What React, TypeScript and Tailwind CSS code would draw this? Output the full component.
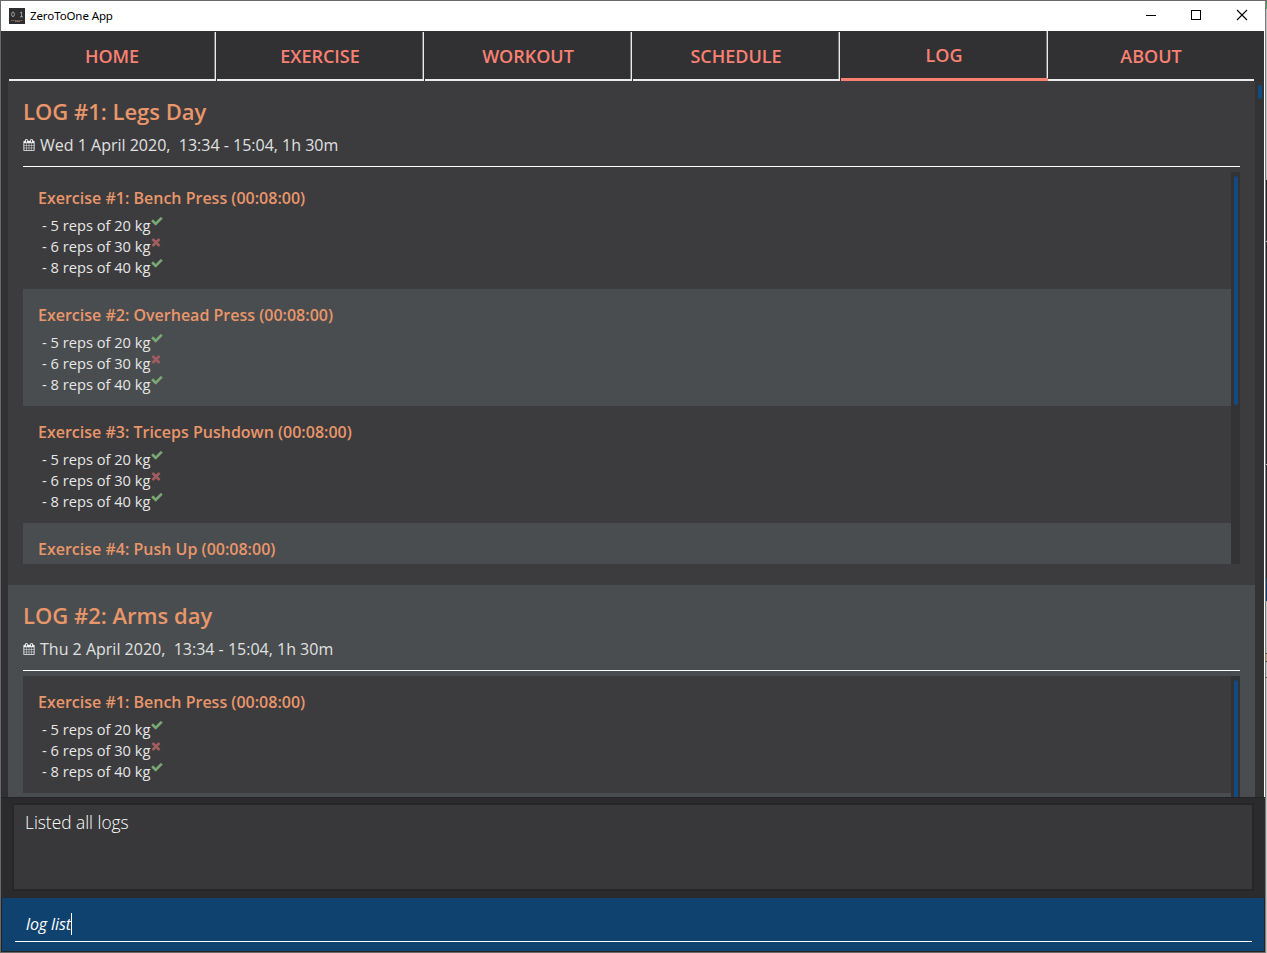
import React from "react";

const CHECK =
  "M1671 566q0 40-28 68l-724 724-136 136q-28 28-68 28t-68-28l-136-136-362-362q-28-28-28-68t28-68l136-136q28-28 68-28t68 28l294 295 656-657q28-28 68-28t68 28l136 136q28 28 28 68z";
const TIMES =
  "M1490 1322q0 40-28 68l-136 136q-28 28-68 28t-68-28l-294-294-294 294q-28 28-68 28t-68-28l-136-136q-28-28-28-68t28-68l294-294-294-294q-28-28-28-68t28-68l136-136q28-28 68-28t68 28l294 294 294-294q28-28 68-28t68 28l136 136q28 28 28 68t-28 68l-294 294 294 294q28 28 28 68z";
const CALENDAR =
  "M192 1664h288v-288h-288v288zm352 0h320v-288h-320v288zm-352-352h288v-320h-288v320zm352 0h320v-320h-320v320zm-352-384h288v-288h-288v288zm736 736h320v-288h-320v288zm-384-736h320v-288h-320v288zm768 736h288v-288h-288v288zm-384-352h320v-320h-320v320zm-352-864v-288q0-13-9.5-22.5t-22.5-9.5h-64q-13 0-22.5 9.5t-9.5 22.5v288q0 13 9.5 22.5t22.5 9.5h64q13 0 22.5-9.5t9.5-22.5zm736 864h288v-320h-288v320zm-384-384h320v-288h-320v288zm384 0h288v-288h-288v288zm32-480v-288q0-13-9.5-22.5t-22.5-9.5h-64q-13 0-22.5 9.5t-9.5 22.5v288q0 13 9.5 22.5t22.5 9.5h64q13 0 22.5-9.5t9.5-22.5zm384-64v1280q0 52-38 90t-90 38h-1408q-52 0-90-38t-38-90v-1280q0-52 38-90t90-38h128v-96q0-66 47-113t113-47h64q66 0 113 47t47 113v96h384v-96q0-66 47-113t113-47h64q66 0 113 47t47 113v96h128q52 0 90 38t38 90z";

type WorkoutSet = { text: string; done: boolean };
type ExerciseEntry = { name: string; sets: WorkoutSet[] };
type Log = { title: string; date: string; exercises: ExerciseEntry[]; moreBelow: boolean };

const SETS: WorkoutSet[] = [
  { text: "- 5 reps of 20 kg", done: true },
  { text: "- 6 reps of 30 kg", done: false },
  { text: "- 8 reps of 40 kg", done: true },
];

const LOGS: Log[] = [
  {
    title: "LOG #1: Legs Day",
    date: "Wed 1 April 2020,\u00a0 13:34 - 15:04, 1h 30m",
    exercises: [
      { name: "Bench Press", sets: SETS },
      { name: "Overhead Press", sets: SETS },
      { name: "Triceps Pushdown", sets: SETS },
      { name: "Push Up", sets: [] },
    ],
    moreBelow: false,
  },
  {
    title: "LOG #2: Arms day",
    date: "Thu 2 April 2020,\u00a0 13:34 - 15:04, 1h 30m",
    exercises: [{ name: "Bench Press", sets: SETS }],
    moreBelow: true,
  },
];

const TABS = ["HOME", "EXERCISE", "WORKOUT", "SCHEDULE", "LOG", "ABOUT"];

function TitleBar() {
  return (
    <div className="flex h-[30px] shrink-0 items-center bg-white pl-2">
      <svg className="h-4 w-4" viewBox="0 0 16 16">
        <rect width="16" height="16" fill="#2d2d2f" />
        <ellipse cx="4" cy="6.3" rx="1.4" ry="2.3" fill="none" stroke="#b9b9b9" strokeWidth="0.8" />
        <path d="M11 5l1.6-1v4.8M11 8.8h3" fill="none" stroke="#b9b9b9" strokeWidth="0.8" />
        <path d="M2 12.5h12" stroke="#8a6450" strokeWidth="1" strokeDasharray="1.5 .5" />
        <path d="M6 13.5h5" stroke="#6b6b6b" strokeWidth="1" />
      </svg>
      <span className="ml-[5px] font-['Noto_Sans'] text-[11.5px] leading-4 tracking-[-0.1px] text-black">ZeroToOne App</span>
      <div className="ml-auto flex">
        <svg className="h-[30px] w-[46px]" viewBox="0 0 46 30" shapeRendering="crispEdges">
          <rect x="18" y="14" width="10" height="1" fill="#000" />
        </svg>
        <svg className="h-[30px] w-[45px]" viewBox="0 0 45 30" shapeRendering="crispEdges">
          <rect x="17.5" y="9.5" width="9" height="9" fill="none" stroke="#000" />
        </svg>
        <svg className="h-[30px] w-[46px]" viewBox="0 0 46 30">
          <path d="M18 9l10 10M28 9l-10 10" stroke="#000" strokeWidth="1.1" />
        </svg>
      </div>
    </div>
  );
}

function Tabs() {
  return (
    <div className="flex h-[50px] shrink-0 bg-[#313133] pl-2">
      {TABS.map((tab) => {
        const active = tab === "LOG";
        const last = tab === "ABOUT";
        return (
          <div
            key={tab}
            className={`flex flex-col text-center text-[18px] font-semibold text-[#fa8072] ${
              last ? "w-[206px] pt-px" : active ? "w-[207px]" : "mr-px w-[207px] pt-px"
            }`}
          >
            <div
              className={`flex flex-1 items-center justify-center ${
                last ? "" : "border-r border-[#e8ecec] shadow-[inset_-1px_0_0_#77797a]"
              }`}
            >
              <span className="leading-6 tracking-[-0.02px]">{tab}</span>
            </div>
            <div className={active ? "h-[3px] bg-[#fa8072]" : "h-[2px] bg-[#e8ecec]"} />
          </div>
        );
      })}
    </div>
  );
}

function Exercise({ index, entry }: { index: number; entry: ExerciseEntry }) {
  return (
    <div className={`h-[117px] shrink-0 pl-[15px] pt-[15px] ${index % 2 ? "bg-[#494d4f]" : "bg-[#3c3c3e]"}`}>
      <div className="h-[22px] whitespace-nowrap text-[16px] font-semibold leading-[22px] text-[#e9966b]">
        {`Exercise #${index + 1}: ${entry.name} (00:08:00)`}
      </div>
      <div className="pl-1 pt-[6px]">
        {entry.sets.map((set) => (
          <div key={set.text} className="flex h-[21px] whitespace-nowrap text-[14.67px] leading-[21px] text-[#e6e6e6]">
            <span>{set.text}</span>
            <svg
              className={`h-[12px] w-[12px] ${set.done ? "ml-[0.5px] fill-[#7aa874]" : "-ml-[0.5px] fill-[#a15c5f]"}`}
              viewBox="64 64 1664 1664"
            >
              <path d={set.done ? CHECK : TIMES} />
            </svg>
          </div>
        ))}
      </div>
    </div>
  );
}

function LogCard({ log, alt }: { log: Log; alt: boolean }) {
  return (
    <div className={`flex h-[504px] shrink-0 flex-col px-[15px] pt-[14px] ${alt ? "bg-[#494d4f]" : "bg-[#3c3c3e]"}`}>
      <div className="h-[32px] whitespace-nowrap text-[22px] font-semibold leading-[32px] text-[#e9966b]">{log.title}</div>
      <div className="mt-[6px] flex h-[24px] items-center">
        <svg className="h-[12px] w-[12px] fill-[#f0f0f0]" viewBox="0 0 1792 1792">
          <path d={CALENDAR} />
        </svg>
        <span className="ml-[5px] whitespace-nowrap text-[16px] leading-[24px] text-[#e0e0e0]">{log.date}</span>
      </div>
      <div className="mt-[9px] h-px shrink-0 bg-white" />
      <div className="mt-[5px] flex h-[392px] shrink-0 overflow-hidden">
        <div className="flex flex-1 flex-col overflow-hidden">
          {log.exercises.map((entry, i) => (
            <Exercise key={entry.name} index={i} entry={entry} />
          ))}
          {log.moreBelow && <div className="flex-1 bg-[#494d4f]" />}
        </div>
        <div className="w-[9px] bg-[#333333] px-[3px] pt-1">
          <div className="h-[229px] w-1 rounded-full bg-[#134b80]" />
        </div>
      </div>
    </div>
  );
}

export default function App() {
  return (
    <div className="flex h-[953px] w-[1267px] overflow-hidden bg-[#696969] pl-px pt-px font-['Open_Sans',sans-serif]">
      <div className="flex w-[1264px] flex-col">
        <TitleBar />
        <div className="flex h-[766px] w-[1264px] flex-col border-r border-white bg-[#313133]">
          <Tabs />
          <div className="flex h-[716px] overflow-hidden pl-[7px]">
            <div className="flex w-[1247px] flex-col overflow-hidden">
              {LOGS.map((log, i) => (
                <LogCard key={log.title} log={log} alt={i % 2 === 1} />
              ))}
            </div>
            <div className="w-[9px] bg-[#333333] px-[3px] pt-1">
              <div className="h-[14px] w-1 rounded-full bg-[#134b80]" />
            </div>
          </div>
        </div>
        <div className="flex h-[101px] flex-col border-t border-[#242425] bg-[#2b2b2d] pl-[11px] pt-[5px]">
          <div className="h-[88px] w-[1242px] border-2 border-[#272728] bg-[#38383a] pl-[11px] pt-[5px] text-[17.33px] font-light leading-6 text-white">
            Listed all logs
          </div>
        </div>
        <div className="h-[54px] border-x border-b border-[#242425] bg-[#10426f] pl-[13px]">
          <div className="flex h-[44px] w-[1237px] items-center border-b border-white pl-[11px] pt-[9px]">
            <span className="text-[16px] italic leading-6 tracking-[-0.1px] text-white">log list</span>
            <span className="h-[22px] w-px bg-white" />
          </div>
        </div>
      </div>
      <div className="flex w-[2px] flex-col border-l border-[#7c7c7c]">
        <div className="h-[8px] bg-[#4b9a5f]" />
        <div className="h-[171px] bg-[#c0c0c0]" />
        <div className="h-[61px] bg-[#29292b]" />
        <div className="h-px bg-[#c0c0c0]" />
        <div className="h-[222px] bg-[#29292b]" />
        <div className="h-px bg-[#c0c0c0]" />
        <div className="h-[113px] bg-[#29292b]" />
        <div className="h-[23px] bg-[#10426f]" />
        <div className="h-[52px] bg-[#c4c4c4]" />
        <div className="h-[9px] border-y border-[#4c4033] bg-[#c9ad83]" />
        <div className="h-[15px] bg-[#c4c4c4]" />
        <div className="h-px bg-[#4c4033]" />
        <div className="flex-1 bg-[#c4c4c4]" />
      </div>
    </div>
  );
}
